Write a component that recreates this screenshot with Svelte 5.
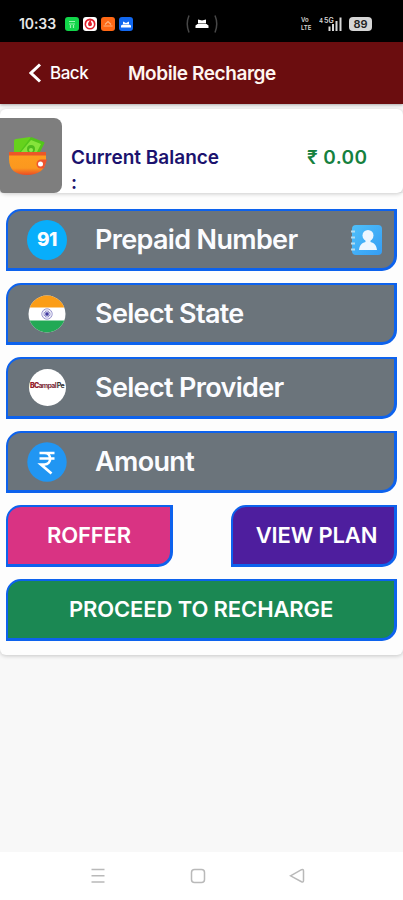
<script lang="ts">
  let fields = [
    { id: "number", label: "Prepaid Number" },
    { id: "state", label: "Select State" },
    { id: "provider", label: "Select Provider" },
    { id: "amount", label: "Amount" },
  ];

  let balance = $state(0);

  const spokes = [0, 30, 60, 90, 120, 150];
</script>

<div class="screen">
  <div class="status">
    <span class="time">10:33</span>
    <svg class="apps" width="68" height="14" viewBox="0 0 68 14">
      <rect width="14" height="14" rx="3" fill="#12d64a" />
      <path d="M4 4.5h6M4 7h6M5.5 8v3M8.5 8v3" stroke="#9af5ae" stroke-width="1.2" />
      <rect x="18" width="14" height="14" rx="3" fill="#fff" />
      <circle cx="25" cy="7" r="5.5" fill="#e0202c" />
      <circle cx="25" cy="7.2" r="3.8" fill="#fff" />
      <path d="M25.6 2.5c-1 1.5-2.6 3-2.6 4.8a2 2 0 0 0 4 0c0-1.5-1.4-2.3-1.4-4.8z" fill="#e0202c" />
      <rect x="36" width="14" height="14" rx="3" fill="#ff6815" />
      <path d="M38.5 9h9M40 7.5l3-3 3 3" stroke="#ffb27d" stroke-width="1.2" fill="none" />
      <rect x="54" width="14" height="14" rx="3" fill="#1268f0" />
      <path d="M56 10.5V8.5l2-1h6l2 1v2zM58 4.5l3 1.5 3-1.5v2.5h-6z" fill="#fff" />
    </svg>
    <svg class="island" width="34" height="20" viewBox="0 0 34 20">
      <path d="M4 1.5Q.5 10 4 18.500M30 1.500Q33.500 10 30 18.500" fill="none" stroke="#484848" stroke-width="1.5" />
      <path d="M10.500 14v-2.500l2-1.500h9l2 1.500V14zM13 5.500l4 1 4-1v4h-8z" fill="#fff" />
    </svg>
    <div class="volte"><span>Vo</span><span>LTE</span></div>
    <svg class="signal" width="24" height="16" viewBox="0 0 24 16">
      <text x="0" y="6.5" font-size="6">4</text>
      <text x="5" y="7" font-size="7">5G</text>
      <path d="M10.5 10.500V15M14 8v7M17.500 5v10M21.500 1.500V15" stroke="#d8d8d8" stroke-width="2" />
    </svg>
    <span class="battery">89</span>
  </div>

  <header>
    <button class="back">
      <svg width="13" height="20" viewBox="0 0 13 20">
        <path d="M11 1.5 2 10l9 8.5" fill="none" stroke="#fff" stroke-width="3" />
      </svg>
      <span>Back</span>
    </button>
    <h1>Mobile Recharge</h1>
  </header>

  <section class="balance">
    <div class="wallet">
      <svg width="40" height="40" viewBox="0 0 40 40">
        <defs>
          <linearGradient id="purse" x1="0" y1="0" x2="0" y2="1">
            <stop offset="0" stop-color="#ff9d1e" />
            <stop offset=".7" stop-color="#fb981f" />
            <stop offset="1" stop-color="#ec4b24" />
          </linearGradient>
        </defs>
        <path d="M6 18V5q0-2 2-2l14-2 3 17z" fill="#66d21c" />
        <path d="m10 18 13-17 13 5q1 1 0 2l-5 10z" fill="#52c51a" />
        <path d="m13 16 10-12 10 4-4 8z" fill="#86e33b" />
        <circle cx="23" cy="13" r="4" fill="#4dbb1d" />
        <circle cx="23" cy="14" r="2" fill="#93e950" />
        <path d="M1 16h37v7c0 11-8 16-19 16S1 34 1 23z" fill="url(#purse)" />
        <path d="M1 16h37v3.5H1z" fill="#ec5728" />
        <path d="M39 23.500h-6a4.500 4.500 0 0 0 0 9h3z" fill="#ee552f" />
        <circle cx="32.500" cy="28" r="2.500" fill="#fff" />
      </svg>
    </div>
    <p class="label">Current Balance :</p>
    <p class="value">₹ {balance.toFixed(2)}</p>
  </section>

  <main>
    {#each fields as field}
      <div class="field">
        <div class="icon">
          {#if field.id === "number"}
            <span class="code">91</span>
          {:else if field.id === "state"}
            <svg width="38" height="38" viewBox="0 0 38 38">
              <clipPath id="round"><circle cx="19" cy="19" r="18.5" /></clipPath>
              <g clip-path="url(#round)">
                <path d="M0 0h38v38H0z" fill="#fff" />
                <path d="M0 0h38v12.5H0z" fill="#fb9d17" />
                <path d="M0 25.5h38V38H0z" fill="#22a955" />
              </g>
              <g fill="none" stroke="#5550ae" stroke-width=".6">
                <circle cx="19" cy="19" r="5.2" />
                {#each spokes as angle}
                  <path d="M15 19h8" transform="rotate({angle} 19 19)" />
                {/each}
              </g>
              <circle cx="19" cy="19" r="1.500" fill="#413b9f" />
            </svg>
          {:else if field.id === "provider"}
            <span class="logo"><b>BC</b><i>ampal</i> Pe</span>
          {:else}
            <svg width="40" height="40" viewBox="0 0 40 40">
              <circle cx="20" cy="20" r="19.7" fill="#2196f3" />
              <path d="M12.5 11h15M12.500 16.500h15M13 11h4.500c7.500 0 7.500 11.500 0 11.500H14L24.500 31.500" fill="none" stroke="#fff" stroke-width="2.7" />
            </svg>
          {/if}
        </div>
        <span class="name">{field.label}</span>
        {#if field.id === "number"}
          <svg class="contacts" width="32" height="32" viewBox="0 0 32 32">
            <defs>
              <linearGradient id="book" x1="0" y1="0" x2="1" y2="1">
                <stop offset="0" stop-color="#4fc0fa" />
                <stop offset="1" stop-color="#359df4" />
              </linearGradient>
            </defs>
            <rect x="1" y="1" width="30" height="30" rx="4" fill="url(#book)" />
            <path d="M0 7.5h4M0 13.500h4M0 19.500h4M0 25.500h4" stroke="#b4dcef" stroke-width="2" />
            <circle cx="17" cy="11.5" r="5.5" fill="#edf6ff" />
            <path d="M14.5 14h5v4c4 1 6 3.500 6.500 8H8c.5-4.500 2.500-7 6.500-8z" fill="#edf6ff" />
          </svg>
        {/if}
      </div>
    {/each}

    <div class="actions">
      <button class="btn roffer">ROFFER</button>
      <button class="btn plan">VIEW PLAN</button>
    </div>
    <button class="btn proceed">PROCEED TO RECHARGE</button>
  </main>

  <nav>
    <svg width="16" height="16" viewBox="0 0 16 16">
      <path d="M1.5 1.500h13M1.500 7.700h13M1.500 14h13" />
    </svg>
    <svg width="16" height="16" viewBox="0 0 16 16">
      <rect x="1.5" y="1.5" width="13" height="13" rx="3" />
    </svg>
    <svg width="16" height="16" viewBox="0 0 16 16">
      <path d="M1.5 7.8 12.500 1.700Q14.500 1 14.500 3v9.500q0 2-2 1.200z" />
    </svg>
  </nav>
</div>

<style>
  :global(body) {
    margin: 0;
  }

  .screen {
    width: 403px;
    height: 900px;
    display: flex;
    flex-direction: column;
    overflow: hidden;
    background: #f8f8f8;
    font-family: Inter, "Liberation Sans", sans-serif;
    font-weight: 600;
  }

  button {
    font: inherit;
    color: #fff;
    border: 0;
    padding: 0;
    cursor: pointer;
  }

  h1, p {
    margin: 0;
  }

  .status {
    box-sizing: border-box;
    height: 42px;
    padding: 5px 0 0 19px;
    display: flex;
    align-items: center;
    background: #000;
    color: #e6e6e6;

    .time {
      width: 46px;
      font-size: 14px;
      letter-spacing: -0.1px;
    }

    .island {
      margin-left: 52px;
    }
  }

  .volte {
    width: 13px;
    margin-left: 82px;
    display: flex;
    flex-direction: column;
    gap: 1px;
    font-size: 6px;
    line-height: 7px;
    color: #d8d8d8;
  }

  .signal {
    margin-left: 5px;
    fill: #d8d8d8;
  }

  .battery {
    width: 23px;
    margin-left: 6px;
    border-radius: 4px;
    background: #d5d5d5;
    color: #222;
    font-size: 11px;
    line-height: 14px;
    text-align: center;
  }

  header {
    height: 62px;
    flex-shrink: 0;
    display: flex;
    align-items: center;
    background: #6b0d0f;
    color: #fff6f0;
    box-shadow: 0 1px 3px #0005;

    h1 {
      font-size: 19px;
      font-weight: 600;
      letter-spacing: -0.42px;
    }
  }

  .back {
    width: 99px;
    margin-left: 29px;
    display: flex;
    align-items: center;
    gap: 8px;
    background: none;
    font-size: 17px;
    font-weight: 500;
    letter-spacing: -0.5px;
  }

  .balance {
    height: 84px;
    margin-top: 5px;
    flex-shrink: 0;
    display: flex;
    position: relative;
    background: #fff;
    border-radius: 6px;
    box-shadow: 0 1px 4px #0003;
    font-size: 19px;
    line-height: 25px;

    .wallet {
      width: 62px;
      height: 75px;
      margin-top: 9px;
      display: flex;
      align-items: center;
      justify-content: center;
      padding-right: 6px;
      box-sizing: border-box;
      border-radius: 0 8px 8px 4px;
      background: #7e7e7e;
    }

    .label {
      width: 152px;
      margin: 36px 0 0 9px;
      color: #1b126e;
      letter-spacing: 0;
    }

    .value {
      margin: 36px 0 0 84px;
      color: #16813f;
      letter-spacing: 0.4px;
    }
  }

  main {
    box-sizing: border-box;
    height: 462px;
    padding: 16px 6px 0;
    flex-shrink: 0;
    display: flex;
    flex-direction: column;
    gap: 12px;
    background: #fdfdfd;
    border-radius: 0 0 6px 6px;
    box-shadow: 0 1px 4px #0003;
  }

  .field, .btn {
    box-sizing: border-box;
    height: 62px;
    border: 3px solid #0d62ed;
    border-width: 2px 3px 3px 2px;
    border-radius: 15px 0;
  }

  .field {
    padding: 0 11px 0 19px;
    display: flex;
    align-items: center;
    background: #6b747b;
    color: #fbfcff;

    .icon {
      width: 40px;
      height: 40px;
      margin-right: 28px;
      display: flex;
      align-items: center;
      justify-content: center;
    }

    .name {
      font-size: 27px;
      line-height: 32px;
      letter-spacing: -0.66px;
    }

    .contacts {
      margin-left: auto;
    }
  }

  .code {
    width: 40px;
    border-radius: 50%;
    background: #08aefb;
    font-size: 19px;
    font-weight: 800;
    line-height: 40px;
    letter-spacing: -0.5px;
    text-align: center;
  }

  .logo {
    width: 37px;
    border-radius: 50%;
    background: #fff;
    color: #333;
    font-size: 7px;
    font-weight: 700;
    line-height: 34px;
    padding-bottom: 3px;
    letter-spacing: -0.7px;
    text-align: center;
    white-space: nowrap;

    b {
      color: #941c2c;
    }

    i {
      font-style: normal;
      color: #7e303a;
    }
  }

  .actions {
    display: flex;
    justify-content: space-between;
  }

  .btn {
    padding-bottom: 2px;
    font-size: 22px;
    letter-spacing: -0.12px;

    &.roffer {
      width: 167px;
      background: #d93383;
    }

    &.plan {
      width: 166px;
      padding-left: 6px;
      background: #4e1e9e;
    }

    &.proceed {
      background: #1b8853;
    }
  }

  nav {
    box-sizing: border-box;
    height: 48px;
    margin-top: auto;
    padding: 0 98px 0 90px;
    display: flex;
    align-items: center;
    justify-content: space-between;
    background: #fff;

    svg {
      fill: none;
      stroke: #b9b9b9;
      stroke-width: 1.5;
    }
  }
</style>
